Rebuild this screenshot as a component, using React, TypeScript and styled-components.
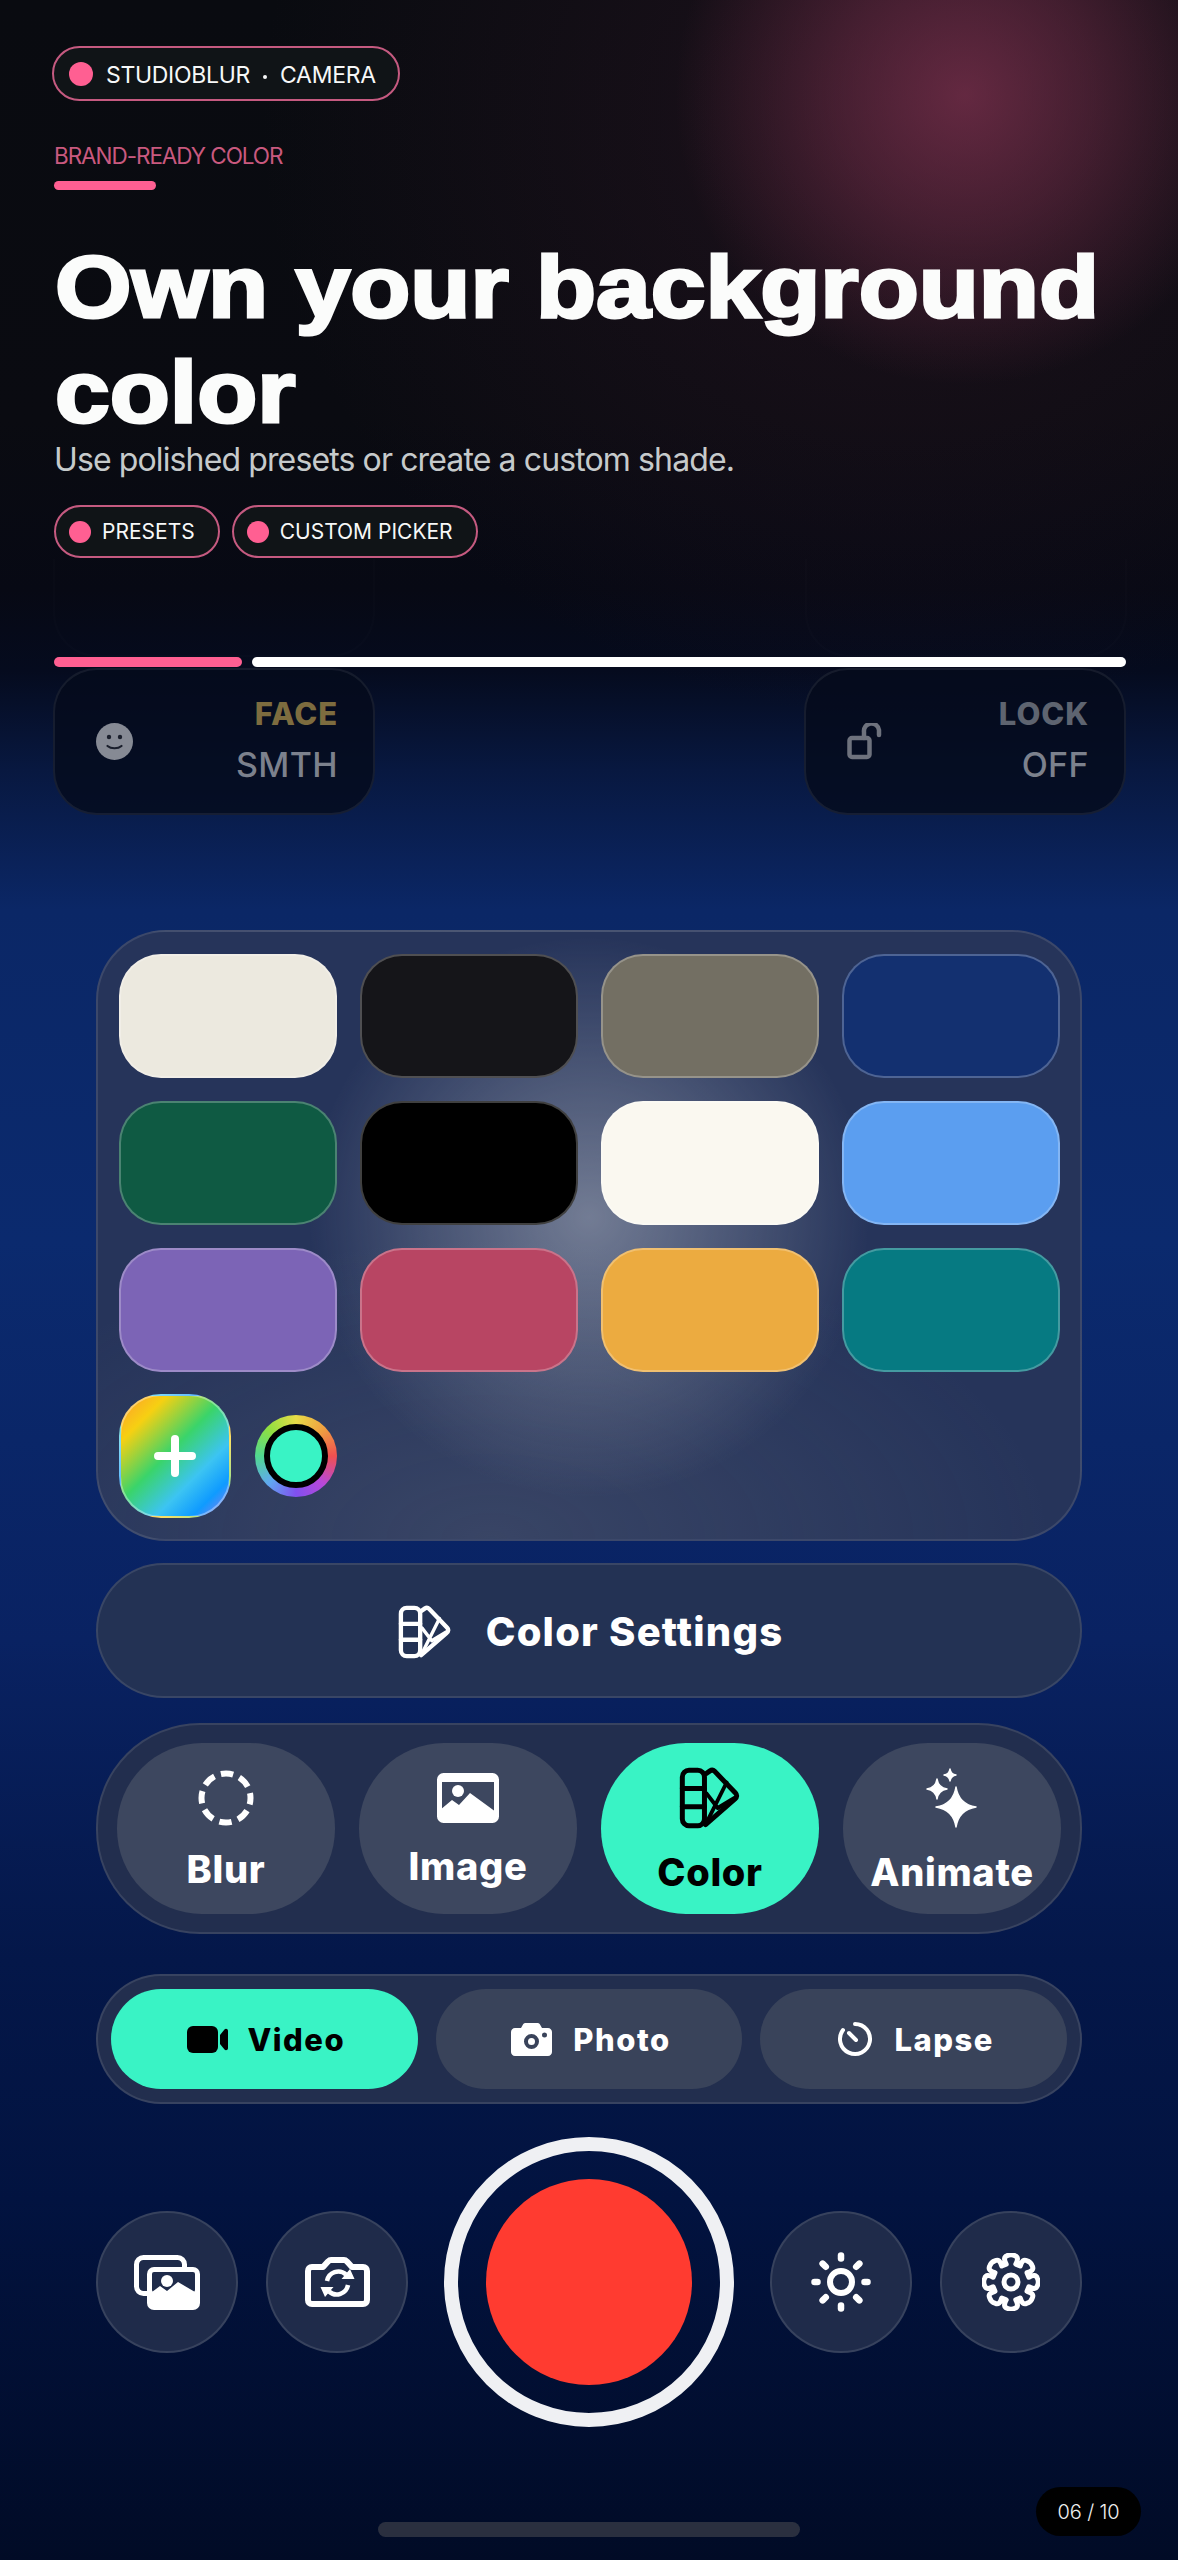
import styled, { createGlobalStyle } from 'styled-components';

const GlobalStyle = createGlobalStyle`
    html, body {
        margin: 0;
        padding: 0;
        background: #010b24;
    }
    * {
        box-sizing: border-box;
    }
`;

const Stage = styled.div`
    position: relative;
    width: 1178px;
    height: 2560px;
    overflow: hidden;
    font-family: Inter, 'Noto Sans', sans-serif;
    color: #fff;
    background:
        radial-gradient(circle 290px at 965px 95px, rgba(128, 50, 80, 0.72), rgba(128, 50, 80, 0.42) 45%, rgba(128, 50, 80, 0) 100%),
        radial-gradient(ellipse 640px 600px at 900px 120px, rgba(70, 30, 50, 0.32), rgba(70, 30, 50, 0) 100%),
        linear-gradient(
            180deg,
            #090b10 0,
            #0a0b11 420px,
            #070914 590px,
            #050b1e 670px,
            #081840 770px,
            #0b2766 910px,
            #0b2a6e 1240px,
            #092262 1640px,
            #041749 1960px,
            #021340 2200px,
            #010b26 2560px
        );
`;

const Hero = styled.header`
    height: 657px;
    padding: 46px 52px 0;
    display: flex;
    flex-direction: column;
    align-items: flex-start;
`;

const Pill = styled.div<{ $small?: boolean }>`
    display: inline-flex;
    align-items: center;
    height: ${p => (p.$small ? '53px' : '55px')};
    gap: ${p => (p.$small ? '11px' : '13px')};
    padding: ${p => (p.$small ? '0 23px 0 13px' : '0 22px 0 15px')};
    border: 2px solid #c55a80;
    border-radius: 28px;
    background: #101417;
    font-size: ${p => (p.$small ? '21px' : '23px')};
    letter-spacing: ${p => (p.$small ? '0' : '-0.3px')};
    color: #f7f8f8;
    white-space: nowrap;
`;

const PillLabel = styled.span`
    padding-top: 2px;
`;

const Dot = styled.span<{ $small?: boolean }>`
    flex: none;
    width: ${p => (p.$small ? '22px' : '24px')};
    height: ${p => (p.$small ? '22px' : '24px')};
    border-radius: 50%;
    background: #ff5f92;
`;

const Separator = styled.span`
    display: inline-block;
    width: 4px;
    height: 4px;
    margin: 0 13px 4px;
    border-radius: 50%;
    background: #f7f8f8;
`;

const Kicker = styled.div`
    margin-top: 41px;
    padding-left: 2px;
    font-size: 22.5px;
    line-height: 28px;
    letter-spacing: -1.05px;
    color: #c9597f;
`;

const KickerRule = styled.div`
    width: 102px;
    height: 9px;
    margin: 11px 0 0 2px;
    border-radius: 5px;
    background: #ff5f92;
`;

const Headline = styled.h1`
    margin: 44px 0 0 3px;
    width: 1000px;
    font-family: 'Liberation Sans', Arial, sans-serif;
    font-size: 88px;
    font-weight: 900;
    line-height: 105px;
    color: #fbfcfb;
    -webkit-text-stroke: 3px #fbfcfb;
    transform: scaleX(1.118);
    transform-origin: left center;
`;

const Lead = styled.p`
    margin: -5px 0 0 2px;
    font-size: 32px;
    line-height: 42px;
    letter-spacing: -0.88px;
    color: #c6cacb;
`;

const ChipRow = styled.div`
    display: flex;
    gap: 12px;
    margin: 24px 0 0 2px;
`;

const GhostRow = styled.div`
    display: flex;
    justify-content: space-between;
    width: 1074px;
    height: 98px;
    margin: auto 0 0 1px;
`;

const GhostCard = styled.div`
    width: 322px;
    height: 98px;
    padding: 44px 38px 0 0;
    border: 2px solid rgba(255, 255, 255, 0.012);
    border-top: 0;
    border-radius: 0 0 44px 44px;
    text-align: right;
    font-size: 32px;
    line-height: 30px;
    color: rgba(255, 255, 255, 0.014);
`;

const ProgressRow = styled.div`
    display: flex;
    gap: 10px;
    height: 10px;
    margin: 0 52px 0 54px;
`;

const ProgressBar = styled.div<{ $color: string; $grow?: boolean }>`
    flex: ${p => (p.$grow ? '1' : '0 0 188px')};
    border-radius: 5px;
    background: ${p => p.$color};
`;

const StatusRow = styled.div`
    display: flex;
    justify-content: space-between;
    margin: 1px 52px 0 53px;
`;

const StatusCard = styled.div`
    display: flex;
    align-items: center;
    justify-content: space-between;
    width: 322px;
    height: 147px;
    padding: 0 35px 0 41px;
    border: 2px solid rgba(255, 255, 255, 0.07);
    border-radius: 44px;
    background: rgba(5, 11, 28, 0.82);
`;

const StatusText = styled.div`
    display: flex;
    flex-direction: column;
    align-items: flex-end;
    gap: 17px;
    padding-bottom: 3px;
`;

const StatusTitle = styled.span<{ $color: string }>`
    font-size: 31px;
    font-weight: 800;
    line-height: 32px;
    letter-spacing: 0.9px;
    color: ${p => p.$color};
`;

const StatusValue = styled.span`
    font-size: 34px;
    font-weight: 500;
    line-height: 36px;
    letter-spacing: 0.4px;
    color: #7c818d;
`;

const Controls = styled.main`
    display: flex;
    flex-direction: column;
    margin: 115px 96px 0;
`;

const SwatchPanel = styled.section`
    height: 611px;
    padding: 22px 21px;
    border: 2px solid rgba(255, 255, 255, 0.1);
    border-radius: 70px;
    background:
        radial-gradient(circle 280px at 50% 47%, rgba(190, 195, 205, 0.5), rgba(190, 195, 205, 0) 100%),
        radial-gradient(ellipse 560px 300px at 40% 100%, rgba(130, 135, 145, 0.2), rgba(130, 135, 145, 0) 100%),
        #26345a;
`;

const SwatchGrid = styled.div`
    display: grid;
    grid-template-columns: repeat(4, 218px);
    grid-auto-rows: 124px;
    gap: 23px;
    justify-content: space-between;
`;

const Swatch = styled.div<{ $color: string }>`
    border: 2px solid rgba(255, 255, 255, 0.25);
    border-radius: 42px;
    background: ${p => p.$color};
`;

const SwatchTools = styled.div`
    display: flex;
    align-items: center;
    gap: 24px;
    margin-top: 22px;
`;

const AddButton = styled.div`
    display: flex;
    align-items: center;
    justify-content: center;
    width: 112px;
    height: 124px;
    border: 2px solid rgba(255, 255, 255, 0.35);
    border-radius: 42px;
    background: linear-gradient(
        135deg,
        #ff9b2e 0%,
        #f6d012 20%,
        #3ad46a 46%,
        #3cc4f2 68%,
        #0f9bff 84%,
        #9b78f0 100%
    );
`;

const ColorRing = styled.div`
    display: flex;
    align-items: center;
    justify-content: center;
    width: 82px;
    height: 82px;
    border-radius: 50%;
    background: conic-gradient(#e8dc48, #f0a040, #f05050, #b848d8, #8050f0, #60a8f0, #50d890, #90e040, #e8dc48);
`;

const ColorCore = styled.div`
    width: 64px;
    height: 64px;
    border: 6px solid #000;
    border-radius: 50%;
    background: #39f3c5;
`;

const SettingsButton = styled.button`
    display: flex;
    align-items: center;
    justify-content: center;
    gap: 34px;
    height: 135px;
    margin-top: 22px;
    padding: 2px 0 0 3px;
    border: 2px solid rgba(255, 255, 255, 0.1);
    border-radius: 68px;
    background: #233254;
    color: #fff;
    font-family: inherit;
    font-size: 40px;
    font-weight: 800;
    letter-spacing: 1.2px;
`;

const ModePanel = styled.div`
    display: grid;
    grid-template-columns: repeat(4, 218px);
    justify-content: space-between;
    height: 211px;
    margin-top: 25px;
    padding: 18px 19px;
    border: 2px solid rgba(255, 255, 255, 0.1);
    border-radius: 104px;
    background: #222e4e;
`;

const ModeItem = styled.div<{ $active?: boolean }>`
    display: flex;
    flex-direction: column;
    align-items: center;
    justify-content: center;
    gap: 25px;
    height: 171px;
    border-radius: 85px;
    background: ${p => (p.$active ? '#39f3c5' : '#3d475f')};
    color: ${p => (p.$active ? '#000' : '#fff')};
    font-size: 38px;
    font-weight: 800;
    line-height: 36px;
    letter-spacing: 0.7px;
`;

const CapturePanel = styled.div`
    display: grid;
    grid-template-columns: repeat(3, 1fr);
    gap: 18px;
    height: 130px;
    margin-top: 40px;
    padding: 13px 13px;
    border: 2px solid rgba(255, 255, 255, 0.1);
    border-radius: 65px;
    background: #222e4e;
`;

const CaptureItem = styled.div<{ $active?: boolean }>`
    display: flex;
    align-items: center;
    justify-content: center;
    gap: ${p => (p.$active ? '19px' : '21px')};
    height: 100px;
    padding-left: 4px;
    border-radius: 50px;
    background: ${p => (p.$active ? '#39f3c5' : '#39435a')};
    color: ${p => (p.$active ? '#000' : '#fff')};
    font-size: 31px;
    font-weight: 800;
    letter-spacing: 1.5px;
`;

const ShutterRow = styled.div`
    display: flex;
    align-items: center;
    justify-content: space-between;
    height: 290px;
    margin-top: 33px;
`;

const SideGroup = styled.div`
    display: flex;
    gap: 28px;
`;

const RoundButton = styled.button`
    display: flex;
    align-items: center;
    justify-content: center;
    width: 142px;
    height: 142px;
    padding: 0;
    border: 2px solid rgba(255, 255, 255, 0.11);
    border-radius: 50%;
    background: #1f2b4a;
    color: #fff;
`;

const Shutter = styled.div`
    display: flex;
    align-items: center;
    justify-content: center;
    width: 290px;
    height: 290px;
    border: 14px solid #eff0f3;
    border-radius: 50%;
`;

const ShutterCore = styled.div`
    width: 206px;
    height: 206px;
    border-radius: 50%;
    background: #ff3b30;
`;

const HomeBar = styled.div`
    width: 422px;
    height: 15px;
    margin: 95px auto 0;
    border-radius: 8px;
    background: #2a2f3f;
`;

const PageTag = styled.div`
    position: absolute;
    left: 1036px;
    top: 2487px;
    display: flex;
    align-items: center;
    justify-content: center;
    width: 105px;
    height: 49px;
    border-radius: 25px;
    background: #000;
    font-size: 20px;
    font-weight: 300;
    letter-spacing: -0.1px;
    color: #f0f0f0;
`;

const swatches = [
    '#ece9df', '#151519', '#736f63', '#133070',
    '#0f5a43', '#000000', '#faf8f0', '#5b9ef0',
    '#7c64b6', '#b84563', '#ecab40', '#067a82',
];

const starPath = (cx: number, cy: number, r: number) => {
    const k = r * 0.14;
    return `M${cx} ${cy - r}Q${cx + k} ${cy - k} ${cx + r} ${cy}Q${cx + k} ${cy + k} ${cx} ${cy + r}Q${cx - k} ${cy + k} ${cx - r} ${cy}Q${cx - k} ${cy - k} ${cx} ${cy - r}Z`;
};

const gearPath = () => {
    const teeth = 8;
    const c = 29;
    const point = (r: number, deg: number) => {
        const a = (deg * Math.PI) / 180;
        return `${(c + r * Math.cos(a)).toFixed(2)} ${(c + r * Math.sin(a)).toFixed(2)}`;
    };
    let d = '';
    for (let i = 0; i < teeth; i++) {
        const mid = -90 + (360 / teeth) * i;
        d += `${i === 0 ? 'M' : 'L'}${point(18.5, mid - 15)}`;
        d += `Q${point(26, mid - 19)} ${point(26.5, mid - 9)}`;
        d += `Q${point(28.5, mid)} ${point(26.5, mid + 9)}`;
        d += `Q${point(26, mid + 19)} ${point(18.5, mid + 15)}`;
    }
    return d + 'Z';
};

const SwatchIcon = ({ size }: { size: number }) => (
    <svg width={size} height={size} viewBox="0 0 56 56" fill="none" stroke="currentColor" strokeWidth="4.5" strokeLinejoin="round" strokeLinecap="round">
        <rect x="3" y="3" width="20" height="50" rx="6" />
        <path d="M3 19.500h20M3 36h20" />
        <path d="M23 7l5-3.500c1.500-1 3-.800 4.200.400L51 23.500c1.600 1.700 1.400 4-.400 5.300L24 52" />
        <path d="M25 50 43 14M25 24l10 13M35 37l15-9" strokeWidth="3.500" />
    </svg>
);

const DashedCircleIcon = () => (
    <svg width="56" height="56" viewBox="0 0 56 56" fill="none" stroke="currentColor" strokeWidth="6">
        <circle cx="28" cy="28" r="24.500" strokeDasharray="12.500 6.750" strokeDashoffset="6" />
    </svg>
);

const ImageIcon = () => (
    <svg width="62" height="50" viewBox="0 0 62 50" fill="none">
        <rect x="2.500" y="2.500" width="57" height="45" rx="4" stroke="currentColor" strokeWidth="5" />
        <rect x="2" y="2" width="58" height="7" rx="3" fill="currentColor" />
        <circle cx="21" cy="18" r="6" fill="currentColor" />
        <path d="M3 37l12-10 7 5 11-12 26 19v8H3Z" fill="currentColor" />
    </svg>
);

const SparklesIcon = () => (
    <svg width="52" height="62" viewBox="0 0 52 62" fill="currentColor" stroke="currentColor" strokeWidth="1.500" strokeLinejoin="round">
        <path d={starPath(30, 40, 20)} />
        <path d={starPath(11, 22, 10)} />
        <path d={starPath(24, 8, 6)} />
    </svg>
);

const VideoIcon = () => (
    <svg width="41" height="27" viewBox="0 0 41 27" fill="currentColor">
        <rect width="31" height="27" rx="6" />
        <path d="M33 9 37.500 3.500c1.200-1.300 3.500-.500 3.500 1.300v17.400c0 1.800-2.300 2.600-3.500 1.300L33 18Z" />
    </svg>
);

const CameraIcon = () => (
    <svg width="41" height="33" viewBox="0 0 41 33" fill="currentColor" fillRule="evenodd">
        <path d="M4 5h6l2-3.500C12.600.500 13.500 0 14.500 0h12c1 0 1.900.500 2.500 1.500L31 5h6c2.200 0 4 1.800 4 4v20c0 2.200-1.800 4-4 4H4c-2.200 0-4-1.800-4-4V9c0-2.200 1.800-4 4-4ZM20.500 11a7.500 7.500 0 1 0 0 15 7.500 7.500 0 0 0 0-15Zm0 4a3.500 3.500 0 1 1 0 7 3.500 3.500 0 0 1 0-7ZM33.500 9.500a2.500 2.500 0 1 0 0 5 2.500 2.500 0 0 0 0-5Z" />
    </svg>
);

const TimerIcon = () => (
    <svg width="36" height="36" viewBox="0 0 36 36" fill="none" stroke="currentColor" strokeWidth="4" strokeLinecap="round">
        <path d="M18 3a15 15 0 1 1-12 6" />
        <path d="M12 12l7 7" />
    </svg>
);

const GalleryIcon = () => (
    <svg width="66" height="55" viewBox="0 0 66 55" fill="none">
        <rect x="2.500" y="2.500" width="48" height="36" rx="7" stroke="currentColor" strokeWidth="5" />
        <rect x="13" y="12" width="53" height="43" rx="7" fill="currentColor" />
        <rect x="18" y="17" width="43" height="20" rx="2" fill="#1f2b4a" />
        <circle cx="33" cy="26" r="6" fill="currentColor" />
        <path d="M18 37l8-6 7 5 11-9 17 10v2H18Z" fill="currentColor" />
    </svg>
);

const FlipCameraIcon = () => (
    <svg width="65" height="51" viewBox="0 0 65 51" fill="none" stroke="currentColor" strokeWidth="6" strokeLinejoin="round">
        <path d="M7 10h11l5-5.500c1-1 2-1.500 3-1.500h13c1 0 2 .500 3 1.500l5 5.500h11c2.500 0 4 1.500 4 4v29c0 2.500-1.500 4-4 4H7c-2.500 0-4-1.500-4-4V14c0-2.500 1.500-4 4-4Z" />
        <path d="M22 24a11.500 11.500 0 0 1 19-6.500M43 28a11.500 11.500 0 0 1-19 6.500" strokeWidth="4.500" />
        <path d="M36.500 22h13L45 12ZM28.500 30h-13L20 40Z" fill="currentColor" stroke="none" />
    </svg>
);

const SunIcon = () => {
    const rays = [0, 45, 90, 135, 180, 225, 270, 315];
    return (
        <svg width="60" height="60" viewBox="0 0 60 60" fill="none" stroke="currentColor" strokeLinecap="round">
            <circle cx="30" cy="30" r="11" strokeWidth="6" />
            {rays.map(deg => (
                <line key={deg} x1="30" y1={deg % 90 ? 8.500 : 6.500} x2="30" y2={deg % 90 ? 4 : 3.500} strokeWidth="6.500" transform={`rotate(${deg} 30 30)`} />
            ))}
        </svg>
    );
};

const GearIcon = () => (
    <svg width="58" height="58" viewBox="0 0 58 58" fill="none" stroke="currentColor" strokeWidth="5" strokeLinejoin="round">
        <path d={gearPath()} />
        <circle cx="29" cy="29" r="7" />
    </svg>
);

const FaceIcon = () => (
    <svg width="37" height="37" viewBox="0 0 37 37">
        <circle cx="18.500" cy="18.500" r="18.500" fill="#868a94" />
        <circle cx="13" cy="14" r="2.200" fill="#1a1f2c" />
        <circle cx="24" cy="14" r="2.200" fill="#1a1f2c" />
        <path d="M11.500 23c3.500 3 10.500 3 14 0" fill="none" stroke="#1a1f2c" strokeWidth="2.200" strokeLinecap="round" />
    </svg>
);

const OpenLockIcon = () => (
    <svg width="37" height="37" viewBox="0 0 37 37" fill="none" stroke="#6e727d" strokeWidth="4.500" strokeLinejoin="round" strokeLinecap="round">
        <rect x="2.500" y="15" width="20" height="19" rx="2.500" />
        <path d="M17 15V9a7.500 7.500 0 0 1 15-2v5" />
    </svg>
);

const App = () => {
    return (
        <Stage>
            <GlobalStyle />
            <Hero>
                <Pill>
                    <Dot />
                    <PillLabel>
                        STUDIOBLUR
                        <Separator />
                        CAMERA
                    </PillLabel>
                </Pill>
                <Kicker>BRAND-READY COLOR</Kicker>
                <KickerRule />
                <Headline>Own your background color</Headline>
                <Lead>Use polished presets or create a custom shade.</Lead>
                <ChipRow>
                    <Pill $small>
                        <Dot $small />
                        PRESETS
                    </Pill>
                    <Pill $small>
                        <Dot $small />
                        CUSTOM PICKER
                    </Pill>
                </ChipRow>
                <GhostRow>
                    <GhostCard>SMTH</GhostCard>
                    <GhostCard>OFF</GhostCard>
                </GhostRow>
            </Hero>

            <ProgressRow>
                <ProgressBar $color="#ff5f92" />
                <ProgressBar $color="#ffffff" $grow />
            </ProgressRow>

            <StatusRow>
                <StatusCard>
                    <FaceIcon />
                    <StatusText>
                        <StatusTitle $color="#7d6c3f">FACE</StatusTitle>
                        <StatusValue>SMTH</StatusValue>
                    </StatusText>
                </StatusCard>
                <StatusCard>
                    <OpenLockIcon />
                    <StatusText>
                        <StatusTitle $color="#5e6470">LOCK</StatusTitle>
                        <StatusValue>OFF</StatusValue>
                    </StatusText>
                </StatusCard>
            </StatusRow>

            <Controls>
                <SwatchPanel>
                    <SwatchGrid>
                        {swatches.map(color => (
                            <Swatch key={color} $color={color} />
                        ))}
                    </SwatchGrid>
                    <SwatchTools>
                        <AddButton>
                            <svg width="42" height="42" viewBox="0 0 42 42" stroke="#fff" strokeWidth="8" strokeLinecap="round">
                                <path d="M21 4v34M4 21h34" />
                            </svg>
                        </AddButton>
                        <ColorRing>
                            <ColorCore />
                        </ColorRing>
                    </SwatchTools>
                </SwatchPanel>

                <SettingsButton>
                    <SwatchIcon size={54} />
                    Color Settings
                </SettingsButton>

                <ModePanel>
                    <ModeItem>
                        <DashedCircleIcon />
                        Blur
                    </ModeItem>
                    <ModeItem>
                        <ImageIcon />
                        Image
                    </ModeItem>
                    <ModeItem $active>
                        <SwatchIcon size={62} />
                        Color
                    </ModeItem>
                    <ModeItem>
                        <SparklesIcon />
                        Animate
                    </ModeItem>
                </ModePanel>

                <CapturePanel>
                    <CaptureItem $active>
                        <VideoIcon />
                        Video
                    </CaptureItem>
                    <CaptureItem>
                        <CameraIcon />
                        Photo
                    </CaptureItem>
                    <CaptureItem>
                        <TimerIcon />
                        Lapse
                    </CaptureItem>
                </CapturePanel>

                <ShutterRow>
                    <SideGroup>
                        <RoundButton>
                            <GalleryIcon />
                        </RoundButton>
                        <RoundButton>
                            <FlipCameraIcon />
                        </RoundButton>
                    </SideGroup>
                    <Shutter>
                        <ShutterCore />
                    </Shutter>
                    <SideGroup>
                        <RoundButton>
                            <SunIcon />
                        </RoundButton>
                        <RoundButton>
                            <GearIcon />
                        </RoundButton>
                    </SideGroup>
                </ShutterRow>
            </Controls>

            <HomeBar />
            <PageTag>06 / 10</PageTag>
        </Stage>
    );
};

export default App;
